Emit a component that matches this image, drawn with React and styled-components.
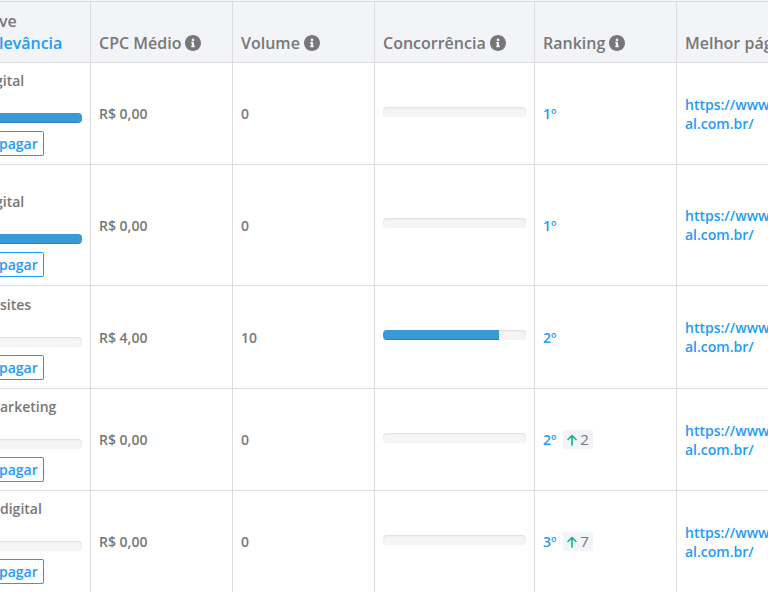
import styled, { createGlobalStyle } from "styled-components";
import { FaInfoCircle } from "react-icons/fa";

const rows = [
  { keyword: "gital", clipped: true, relevance: 100, cpc: "R$ 0,00", volume: 0, competition: 0, rank: "1º", height: 102 },
  { keyword: "gital", clipped: true, relevance: 100, cpc: "R$ 0,00", volume: 0, competition: 0, rank: "1º", height: 121 },
  { keyword: "sites", relevance: 0, cpc: "R$ 4,00", volume: 10, competition: 81, rank: "2º", height: 103 },
  { keyword: "arketing", relevance: 0, cpc: "R$ 0,00", volume: 0, competition: 0, rank: "2º", up: 2, height: 102 },
  { keyword: "digital", relevance: 0, cpc: "R$ 0,00", volume: 0, competition: 0, rank: "3º", up: 7, height: 102 },
];

const Progress = ({ value, label }) => (
  <Track role="progressbar" aria-label={label} aria-valuenow={value}>
    <Fill style={{ width: `${value}%` }} />
  </Track>
);

const InfoHeading = ({ children }) => (
  <HeadLabel>
    {children}
    <FaInfoCircle size={16} viewBox="8 8 496 496" />
  </HeadLabel>
);

const ArrowUp = () => (
  <svg width="10" height="12" viewBox="0 0 10 12" fill="none">
    <path
      d="M5 11V2M1 5.5L5 1.5L9 5.5"
      stroke="#14b88f"
      strokeWidth="1.7"
      strokeLinecap="round"
      strokeLinejoin="round"
    />
  </svg>
);

const App = () => (
  <>
    <GlobalStyle />
    <TableWrapper>
      <Table>
        <colgroup>
          <Col $width={96} />
          <Col $width={142} />
          <Col $width={142} />
          <Col $width={160} />
          <Col $width={142} />
          <Col />
        </colgroup>
        <thead>
          <tr>
            <KeywordHead>
              <HeadLabel>ve</HeadLabel>
              <Link href="#relevancia">levância</Link>
            </KeywordHead>
            <HeadCell>
              <InfoHeading>CPC Médio</InfoHeading>
            </HeadCell>
            <HeadCell>
              <InfoHeading>Volume</InfoHeading>
            </HeadCell>
            <HeadCell>
              <InfoHeading>Concorrência</InfoHeading>
            </HeadCell>
            <HeadCell>
              <InfoHeading>Ranking</InfoHeading>
            </HeadCell>
            <HeadCell>Melhor pág</HeadCell>
          </tr>
        </thead>
        <tbody>
          {rows.map((row, i) => (
            <Row key={i} $height={row.height}>
              <KeywordCell>
                <Keyword $clipped={row.clipped}>{row.keyword}</Keyword>
                <Progress value={row.relevance} label="Relevância" />
                <DeleteButton type="button">pagar</DeleteButton>
              </KeywordCell>
              <Cell>{row.cpc}</Cell>
              <Cell>{row.volume}</Cell>
              <CompetitionCell>
                <Progress value={row.competition} label="Concorrência" />
              </CompetitionCell>
              <Cell>
                <Ranking>
                  <Link href="#ranking">{row.rank}</Link>
                  {row.up && (
                    <Badge>
                      <ArrowUp />
                      {row.up}
                    </Badge>
                  )}
                </Ranking>
              </Cell>
              <Cell>
                <Link href="#pagina">
                  https://www.
                  <br />
                  al.com.br/
                </Link>
              </Cell>
            </Row>
          ))}
        </tbody>
      </Table>
    </TableWrapper>
  </>
);

export default App;

const GlobalStyle = createGlobalStyle`
  * {
    box-sizing: border-box;
  }

  body {
    margin: 0;
    overflow: hidden;
    background-color: #fff;
    color: #777;
    font-family: "Open Sans", sans-serif;
    font-size: 14px;
    font-weight: 600;
    line-height: 19px;
  }
`;

const TableWrapper = styled.div`
  width: 100%;
  padding-top: 1px;
  overflow: hidden;
  background-color: #f3f4f8;
`;

/* the first column starts just outside the visible area */
const Table = styled.table`
  width: calc(100% + 5px);
  margin-left: -5px;
  table-layout: fixed;
  border-spacing: 0;
  border-top: 1px solid #ddd;
  background-color: #fff;
  white-space: nowrap;
`;

const Col = styled.col`
  width: ${({ $width }) => ($width ? `${$width}px` : "auto")};
`;

const HeadCell = styled.th`
  height: 61px;
  padding: 8px;
  border-right: 1px solid #ddd;
  border-bottom: 1px solid #ddd;
  background-color: #f3f4f8;
  font-size: 16px;
  font-weight: 600;
  line-height: 22px;
  text-align: left;
  vertical-align: bottom;

  &:last-child {
    border-right: 0;
  }
`;

const KeywordHead = styled(HeadCell)`
  padding-left: 4px;
`;

const HeadLabel = styled.div`
  display: flex;
  align-items: center;
  gap: 4px;
`;

const Row = styled.tr`
  height: ${({ $height }) => $height}px;
`;

const Cell = styled.td`
  padding: 8px;
  border-right: 1px solid #ddd;
  border-bottom: 1px solid #ddd;
  vertical-align: middle;

  &:last-child {
    border-right: 0;
  }
`;

const KeywordCell = styled(Cell)`
  padding-left: 0;
  vertical-align: bottom;
`;

const CompetitionCell = styled(Cell)`
  padding-bottom: 12px;
`;

const Keyword = styled.div`
  margin-bottom: 23px;
  padding-left: ${({ $clipped }) => ($clipped ? 0 : 5)}px;
`;

const Track = styled.div`
  height: 10px;
  overflow: hidden;
  border-radius: 4px;
  background-color: #f5f5f5;
  box-shadow: inset 0 1px 2px rgba(0, 0, 0, 0.1);
`;

const Fill = styled.div`
  height: 100%;
  background-color: #3a99d9;
  box-shadow: inset 0 -1px 0 rgba(0, 0, 0, 0.15);
`;

const DeleteButton = styled.button`
  display: block;
  height: 25px;
  margin-top: 8px;
  padding: 0 5px 0 4px;
  border: 1px solid #1f9bf9;
  border-left: 0;
  border-radius: 2px;
  background-color: #fff;
  color: #1f9bf9;
  font: inherit;
  cursor: pointer;
`;

const Link = styled.a`
  color: #1f9bf9;
  text-decoration: none;
`;

const Ranking = styled.div`
  display: flex;
  align-items: center;
  gap: 7px;
`;

const Badge = styled.span`
  display: flex;
  align-items: center;
  gap: 3px;
  height: 19px;
  padding: 0 4px;
  border-radius: 2px;
  background-color: #f3f4f8;
  font-size: 15px;
  font-weight: 400;
`;
